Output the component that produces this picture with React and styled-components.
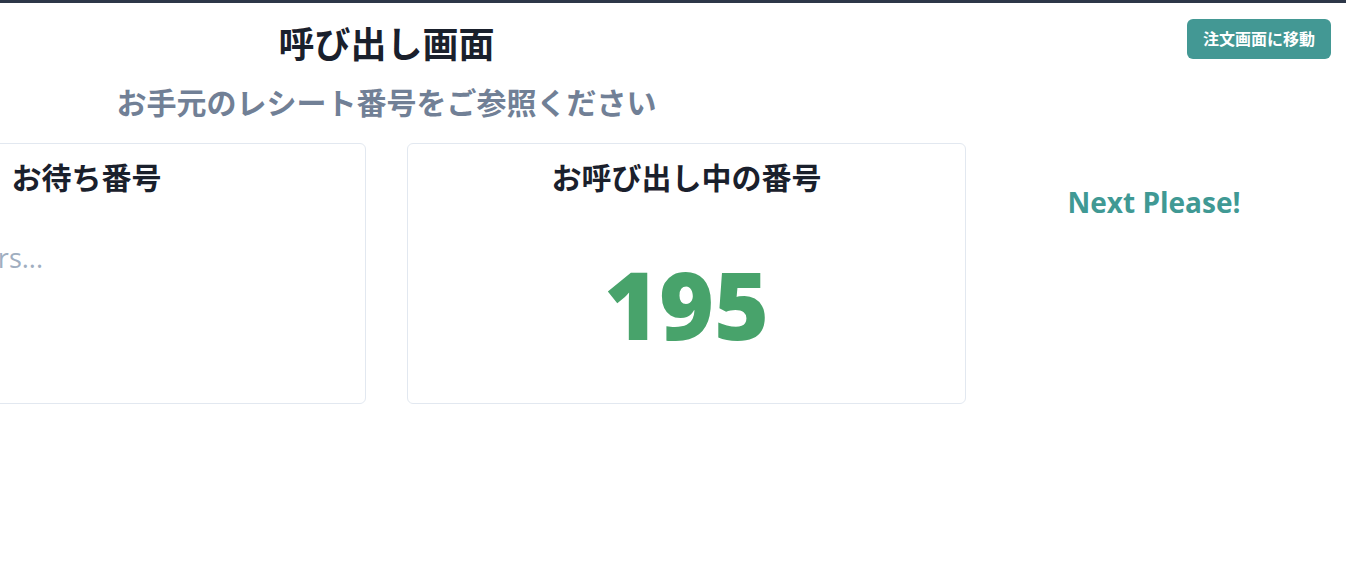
import React from 'react'
import styled, { createGlobalStyle } from 'styled-components'

const GlobalStyle = createGlobalStyle`
  html, body {
    margin: 0;
    padding: 0;
    background: #fff;
    overflow: hidden;
  }
  body {
    font-family: "Open Sans", "Noto Sans CJK JP", sans-serif;
    color: #1a202c;
  }
`

const TopBorder = styled.div`
  height: 3px;
  background: #2d3748;
`

const Page = styled.div`
  display: flex;
  align-items: flex-start;
`

const Main = styled.main`
  flex-shrink: 0;
  width: 1159px;
  margin-left: -193px;
  padding-top: 20px;
`

const Header = styled.header`
  display: flex;
  flex-direction: column;
  align-items: center;
`

const Title = styled.h1`
  margin: 0;
  font-size: 36px;
  line-height: 43px;
  font-weight: 700;
  color: #1a202c;
`

const Subtitle = styled.h2`
  margin: 19px 0 0;
  font-size: 30px;
  line-height: 36px;
  font-weight: 700;
  color: #718096;
`

const Cards = styled.section`
  display: grid;
  grid-template-columns: 559px 559px;
  gap: 41px;
  margin-top: 22px;
`

const Card = styled.div`
  height: 261px;
  box-sizing: border-box;
  border: 1px solid #e2e8f0;
  border-radius: 6px;
  padding: 16px 24px;
  display: flex;
  flex-direction: column;
`

const CardTitle = styled.h3`
  margin: 0;
  text-align: center;
  font-size: 30px;
  line-height: 36px;
  font-weight: 700;
  color: #1a202c;
`

const Placeholder = styled.p`
  margin: 44px 0 0;
  font-size: 27px;
  line-height: 36px;
  color: #a0aec0;
`

const CurrentNumber = styled.div`
  flex: 1;
  display: flex;
  align-items: center;
  justify-content: center;
  padding-top: 25px;
  font-size: 94px;
  font-weight: 800;
  color: #48a36b;
  line-height: 1;
`

const Sidebar = styled.aside`
  flex: 1;
  display: flex;
  flex-direction: column;
  align-items: center;
  padding: 16px 4px 0 0;
`

const MoveButton = styled.button`
  align-self: flex-end;
  margin-right: 11px;
  border: none;
  border-radius: 6px;
  background: #439894;
  color: #fff;
  font-family: inherit;
  font-size: 16px;
  font-weight: 700;
  line-height: 20px;
  padding: 10px 16px;
  cursor: pointer;
`

const NextPlease = styled.div`
  margin-top: 124px;
  font-size: 28px;
  font-weight: 700;
  color: #409994;
`

const App = () => (
  <>
    <GlobalStyle />
    <TopBorder />
    <Page>
      <Main>
        <Header>
          <Title>呼び出し画面</Title>
          <Subtitle>お手元のレシート番号をご参照ください</Subtitle>
        </Header>
        <Cards>
          <Card>
            <CardTitle>お待ち番号</CardTitle>
            <Placeholder>Loading orders...</Placeholder>
          </Card>
          <Card>
            <CardTitle>お呼び出し中の番号</CardTitle>
            <CurrentNumber>195</CurrentNumber>
          </Card>
        </Cards>
      </Main>
      <Sidebar>
        <MoveButton>注文画面に移動</MoveButton>
        <NextPlease>Next Please!</NextPlease>
      </Sidebar>
    </Page>
  </>
)

export default App
